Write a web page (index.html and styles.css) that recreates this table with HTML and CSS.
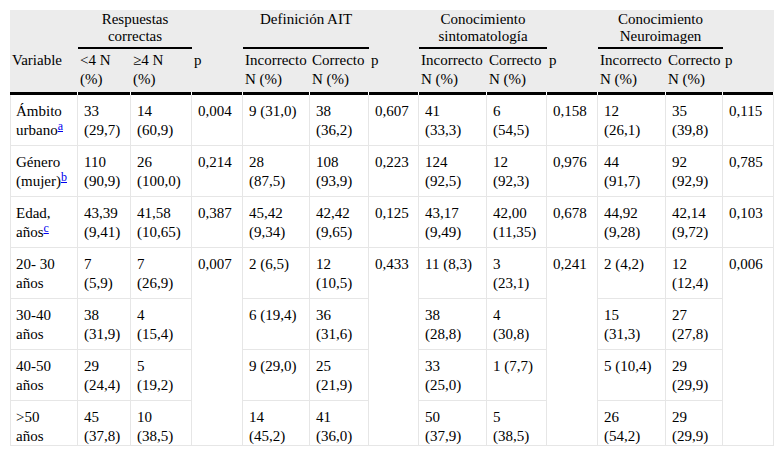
FILE: index.html
```html
<!DOCTYPE html>
<html lang="es">
<head>
<meta charset="utf-8">
<title>Tabla</title>
<link rel="stylesheet" href="styles.css">
</head>
<body>
<div class="wrap">
<table class="data">
<colgroup>
<col class="c68"><col class="c53"><col class="c61"><col class="c51"><col class="c67"><col class="c59"><col class="c50"><col class="c68"><col class="c60"><col class="c51"><col class="c68"><col class="c57"><col class="c51">
</colgroup>
<thead>
<tr class="group">
<th></th>
<th colspan="2" class="span">Respuestas correctas</th>
<th></th>
<th colspan="2" class="span">Definición AIT</th>
<th></th>
<th colspan="2" class="span">Conocimiento sintomatología</th>
<th></th>
<th colspan="2" class="span">Conocimiento Neuroimagen</th>
<th></th>
</tr>
<tr class="sub">
<th>Variable</th>
<th>&lt;4 N<br>(%)</th>
<th>≥4 N<br>(%)</th>
<th>p</th>
<th>Incorrecto<br>N (%)</th>
<th>Correcto<br>N (%)</th>
<th>p</th>
<th>Incorrecto<br>N (%)</th>
<th>Correcto<br>N (%)</th>
<th>p</th>
<th>Incorrecto<br>N (%)</th>
<th>Correcto<br>N (%)</th>
<th>p</th>
</tr>
</thead>
<tbody>
<tr>
<td class="first">Ámbito<br>urbano<a class="note" href="#">a</a></td>
<td>33<br>(29,7)</td><td>14<br>(60,9)</td><td>0,004</td>
<td>9 (31,0)</td><td>38<br>(36,2)</td><td>0,607</td>
<td>41<br>(33,3)</td><td>6<br>(54,5)</td><td>0,158</td>
<td>12<br>(26,1)</td><td>35<br>(39,8)</td><td>0,115</td>
</tr>
<tr>
<td class="first">Género<br>(mujer)<a class="note" href="#">b</a></td>
<td>110<br>(90,9)</td><td>26<br>(100,0)</td><td>0,214</td>
<td>28<br>(87,5)</td><td>108<br>(93,9)</td><td>0,223</td>
<td>124<br>(92,5)</td><td>12<br>(92,3)</td><td>0,976</td>
<td>44<br>(91,7)</td><td>92<br>(92,9)</td><td>0,785</td>
</tr>
<tr>
<td class="first">Edad,<br>años<a class="note" href="#">c</a></td>
<td>43,39<br>(9,41)</td><td>41,58<br>(10,65)</td><td>0,387</td>
<td>45,42<br>(9,34)</td><td>42,42<br>(9,65)</td><td>0,125</td>
<td>43,17<br>(9,49)</td><td>42,00<br>(11,35)</td><td>0,678</td>
<td>44,92<br>(9,28)</td><td>42,14<br>(9,72)</td><td>0,103</td>
</tr>
<tr>
<td class="first">20- 30<br>años</td>
<td>7<br>(5,9)</td><td>7<br>(26,9)</td><td rowspan="4">0,007</td>
<td>2 (6,5)</td><td>12<br>(10,5)</td><td rowspan="4">0,433</td>
<td>11 (8,3)</td><td>3<br>(23,1)</td><td rowspan="4">0,241</td>
<td>2 (4,2)</td><td>12<br>(12,4)</td><td rowspan="4">0,006</td>
</tr>
<tr>
<td class="first">30-40<br>años</td>
<td>38<br>(31,9)</td><td>4<br>(15,4)</td>
<td>6 (19,4)</td><td>36<br>(31,6)</td>
<td>38<br>(28,8)</td><td>4<br>(30,8)</td>
<td>15<br>(31,3)</td><td>27<br>(27,8)</td>
</tr>
<tr>
<td class="first">40-50<br>años</td>
<td>29<br>(24,4)</td><td>5<br>(19,2)</td>
<td>9 (29,0)</td><td>25<br>(21,9)</td>
<td>33<br>(25,0)</td><td>1 (7,7)</td>
<td>5 (10,4)</td><td>29<br>(29,9)</td>
</tr>
<tr>
<td class="first">&gt;50<br>años</td>
<td>45<br>(37,8)</td><td>10<br>(38,5)</td>
<td>14<br>(45,2)</td><td>41<br>(36,0)</td>
<td>50<br>(37,9)</td><td>5<br>(38,5)</td>
<td>26<br>(54,2)</td><td>29<br>(29,9)</td>
</tr>
</tbody>
</table>
</div>
</body>
</html>
```

FILE: styles.css
```css
html, body {
  margin: 0;
  padding: 0;
  background: #ffffff;
}

body {
  font-family: "Liberation Serif", "Times New Roman", serif;
  font-size: 15px;
  color: #000000;
}

.wrap {
  margin: 10px 0 0 10px;
  width: 764px;
  height: 435px;
  overflow: hidden;
  border-bottom: 1px solid #e6e6e6;
}

.data {
  width: 764px;
  table-layout: fixed;
  border-collapse: separate;
  border-spacing: 0;
  font-family: "Liberation Serif", "Times New Roman", serif;
  font-size: 15px;
}

.c68 { width: 68px; }
.c67 { width: 67px; }
.c61 { width: 61px; }
.c60 { width: 60px; }
.c59 { width: 59px; }
.c57 { width: 57px; }
.c53 { width: 53px; }
.c51 { width: 51px; }
.c50 { width: 50px; }

.data th,
.data td {
  font-family: "Liberation Serif", "Times New Roman", serif;
  font-size: 15px;
}

.data th {
  font-weight: normal;
  text-align: left;
  vertical-align: top;
  background-color: #ececec;
  padding: 0 2px;
}

.group th {
  line-height: 17px;
  padding-top: 1px;
  padding-bottom: 4px;
}

.group th.span {
  text-align: center;
  padding-bottom: 2px;
  border-bottom: 2px solid #000000;
}

.sub th {
  line-height: 19px;
  padding-top: 2px;
  padding-bottom: 6px;
  background-color: #ececec;
  background-image:
    linear-gradient(#000000, #000000),
    linear-gradient(#ffffff, #ffffff);
  background-position: left bottom, left bottom;
  background-size: calc(100% - 1px) 3px, 100% 3px;
  background-repeat: no-repeat, no-repeat;
}

.data td {
  line-height: 19px;
  vertical-align: top;
  padding: 7px 6px 5px 6px;
  border-right: 1px solid #e6e6e6;
  border-bottom: 1px solid #e6e6e6;
  background-color: #ffffff;
}

.data td.first {
  border-left: 1px solid #e6e6e6;
  padding-left: 5px;
}

.note {
  color: #0000ee;
  text-decoration: underline;
  font-size: 12px;
  vertical-align: 5px;
  line-height: 0;
}
```
